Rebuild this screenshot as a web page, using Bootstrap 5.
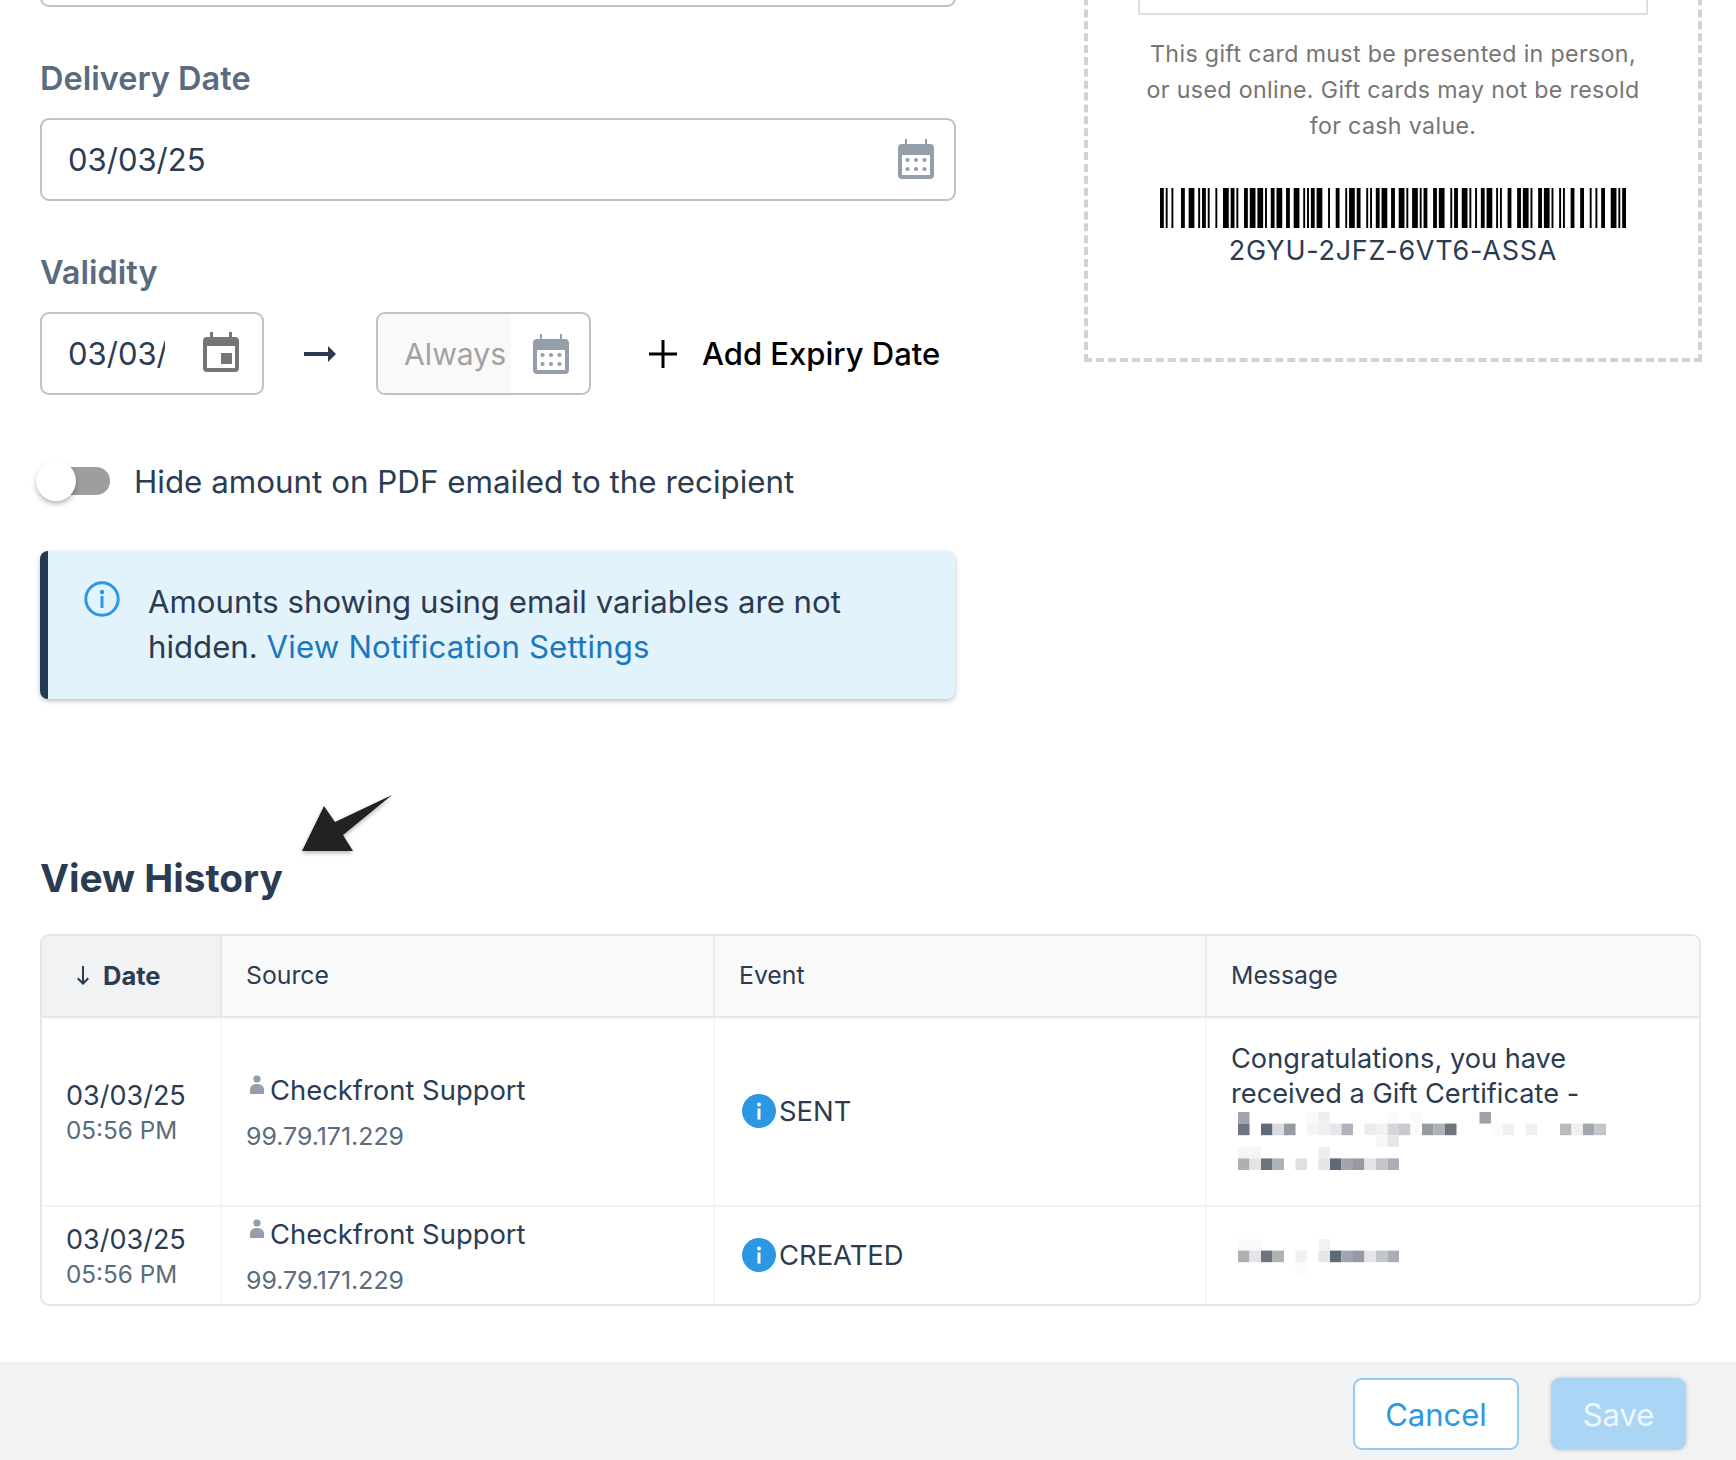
<!DOCTYPE html>
<html lang="en">
<head>
  <meta charset="UTF-8">
  <meta name="viewport" content="width=device-width, initial-scale=1.0">
  <title>Gift Certificate</title>
  <link href="https://cdn.jsdelivr.net/npm/bootstrap@5.3.0/dist/css/bootstrap.min.css" rel="stylesheet">
  <style>
    html, body { height: 1460px; overflow: hidden; }
    body { font-family: Inter, "Liberation Sans", sans-serif; color: #2b3c52; background: #fff; font-size: 31.2px; }
    .page-main { height: 1362px; overflow: hidden; }
    .left-col { width: 916px; margin-left: 40px; flex: none; }
    .right-col { width: 618px; margin-left: 128px; flex: none; }

    .box-field { border: 2.5px solid #bfc1c4; border-radius: 9px; background: #fff; height: 83px; overflow: hidden; }
    .box-field input { border: 0; padding: 0; background: transparent; font-size: 31px; color: #2b3c52; box-shadow: none; border-radius: 0; height: 100%; }
    .top-stub { height: 67px; margin-top: -60px; margin-bottom: 50px; }
    .fld-label { font-size: 32.5px; font-weight: 600; color: #5a6b7e; line-height: 44px; margin: 0 0 17px; display: block; }
    .mb-fld { margin-bottom: 50px; }
    .date-wide { padding: 0 20px 0 26px; }
    .date-wide svg { margin-top: -2px; }
    .date-from { width: 224px; padding: 0 23px 0 26px; }
    .date-from input { width: 97px; }
    .date-from svg { margin-top: -4px; }
    .date-to { width: 215px; }
    .always-part { width: 133px; height: 100%; background: #f9f9f9; padding-left: 26px; }
    .always-part input { width: 100%; color: #a2a2a2; font-size: 30.2px; }
    .always-part input::placeholder { color: #a2a2a2; opacity: 1; }
    .cal-icon { width: 36px; height: 40px; flex: none; }
    .cal-right { margin-left: 22px; }
    .arrow-gap { width: 112px; }
    .add-link { color: #000; font-size: 31px; font-weight: 500; text-decoration: none; margin-left: 58px; padding-top: 2px; white-space: nowrap; }
    .add-link svg { margin: -2px 25px 0 0; }

    .toggle-row { margin-top: 66px; height: 40px; font-size: 31.35px; }
    .toggle-txt { padding-top: 2px; }
    .tgl-track { position: relative; width: 70px; height: 28px; background: #9e9e9e; border-radius: 14px; flex: none; margin-right: 24px; }
    .tgl-track::before { content: ""; position: absolute; left: -4px; top: -6px; width: 40px; height: 40px; border-radius: 50%; background: #fff; box-shadow: 0 3px 5px rgba(0,0,0,.28); }
    .note-box { margin: 50px 1px 0 0; height: 148px; padding: 29px 30px 0 36px; background: #e3f3fc; border: 0; border-left: 8px solid #233a55; border-radius: 8px; box-shadow: 0 2px 5px rgba(60,80,100,.35); color: #2b3c52; line-height: 45px; }
    .note-box svg { width: 36px; height: 36px; flex: none; margin: 1px 28px 0 0; }
    .note-box a { color: #1a78bf; text-decoration: none; letter-spacing: .17px; }

    .hist-title { position: relative; font-size: 38.8px; font-weight: 700; line-height: 56px; margin: 151px 0 28px; color: #2b3c52; }
    .hist-arrow { position: absolute; left: 258px; top: -59px; width: 96px; height: 64px; filter: drop-shadow(0 2px 2px rgba(0,0,0,.3)); }

    .hist-wrap { width: 1661px; height: 372px; border: 2px solid #e5e6e7; border-radius: 9px; overflow: hidden; }
    .hist-table { table-layout: fixed; width: 100%; margin: 0; color: #2b3c52; --bs-table-bg: transparent; }
    .hist-table th { height: 81px; padding: 0 0 0 24px; font-size: 24.8px; font-weight: 400; vertical-align: middle; background: #f9f9f9; border-bottom: 2px solid #e6e7e8; border-right: 2px solid #eaeaea; box-shadow: 0 3px 4px -2px rgba(0,0,0,.05); }
    .hist-table th:last-child, .hist-table td:last-child { border-right: 0; }
    .hist-table th.sorted { background: #f1f2f4; font-weight: 700; font-size: 25.5px; padding-left: 35px; border-right-color: #e6e7e8; }
    .sorted svg { margin: -4px 14px 0 0; vertical-align: middle; }
    .hist-table td { padding: 0 0 0 24px; vertical-align: middle; border-bottom: 2px solid #f1f1f1; border-right: 2px solid #f7f7f7; }
    .hist-table tr:last-child td { border-bottom: 0; }
    .row-big td { height: 189px; }
    .row-small td { height: 98px; }
    .hist-table .cell-src { padding-top: 2px; }
    .sub-time { font-size: 24.3px; color: #5b6b7d; line-height: 32px; display: block; }
    .date-main { font-size: 27px; line-height: 36px; display: block; }
    .who { font-size: 27.4px; line-height: 36px; display: flex; align-items: flex-start; }
    .who svg { width: 14px; height: 19px; margin: 3px 6px 0 4px; flex: none; }
    .ip-txt { font-size: 24.9px; color: #5b6b7d; line-height: 33px; display: block; margin-top: 12px; }
    .evt { font-size: 27.4px; display: flex; align-items: center; margin-left: 3px; }
    .evt svg { width: 34px; height: 34px; flex: none; margin-right: 3px; }
    .msg-txt { font-size: 27.2px; line-height: 35px; display: block; margin-top: -6px; max-width: 380px; }
    .blur-two { display: block; width: 400px; height: 58px; margin: 1px 0 7px 7px; }
    .blur-one { display: block; width: 200px; height: 36px; margin: 2px 0 0 7px; }

    .gift-panel { height: 412px; margin-top: -50px; border: 4px dashed #d2d2d2; padding: 0 50px; border-top: 0; }
    .gift-inner { height: 65px; border: 2.5px solid #dedede; border-top: 0; }
    .gift-terms { font-size: 23.2px; line-height: 36px; color: #757575; text-align: center; margin: 21px 0 0; letter-spacing: .35px; }
    .bar-svg { display: block; width: 466px; height: 40px; margin: 44px auto 0; }
    .gift-code { text-align: center; font-size: 27px; line-height: 36px; letter-spacing: .75px; color: #2b3c52; margin-top: 5px; }

    .page-foot { height: 98px; background: #f1f2f4; padding: 16px 50px 0 0; }
    .page-foot .btn { height: 72px; font-size: 31px; border-radius: 9px; padding: 2px 0 0; }
    .btn-cancel { width: 166px; margin-right: 32px; background: #fff; border: 2.5px solid #93caf0; color: #2c97e2; }
    .btn-save { width: 135px; background: #abd5f4; border: 0; color: #eef7fd; box-shadow: 0 0 4px rgba(0,0,0,.18); }
  </style>
</head>
<body>
  <div class="page-main d-flex">
    <!-- form column -->
    <div class="left-col">
      <div class="box-field top-stub"></div>

      <label class="fld-label">Delivery Date</label>
      <div class="box-field date-wide d-flex align-items-center mb-fld">
        <input type="text" class="form-control" value="03/03/25">
        <svg class="cal-icon" viewBox="0 0 36 40"><use href="#calGrey"/></svg>
      </div>

      <label class="fld-label">Validity</label>
      <div class="d-flex align-items-center">
        <div class="box-field date-from d-flex align-items-center justify-content-between">
          <input type="text" class="form-control" value="03/03/25">
          <svg class="cal-icon" viewBox="0 0 36 40">
            <path fill="#757575" d="M7 0h3v5h16V0h3v5h3a4 4 0 0 1 4 4v27a4 4 0 0 1-4 4H4a4 4 0 0 1-4-4V9a4 4 0 0 1 4-4h3z"/>
            <rect x="4" y="14" width="28" height="22" fill="#fff"/>
            <rect x="18" y="21" width="11" height="11" fill="#757575"/>
          </svg>
        </div>
        <div class="arrow-gap d-flex justify-content-center">
          <svg width="32" height="18" viewBox="0 0 32 18"><path fill="#2b3c52" d="M0 7h24V1l8 8-8 8v-6H0z"/></svg>
        </div>
        <div class="box-field date-to d-flex align-items-center">
          <div class="always-part"><input type="text" class="form-control" placeholder="Always"></div>
          <svg class="cal-icon cal-right" viewBox="0 0 36 40"><use href="#calGrey"/></svg>
        </div>
        <a href="#" class="add-link d-flex align-items-center">
          <svg width="28" height="28" viewBox="0 0 28 28"><path fill="#000" d="M12.500 0h3v12.500H28v3H15.500V28h-3V15.500H0v-3h12.500z"/></svg>Add Expiry Date
        </a>
      </div>

      <div class="toggle-row d-flex align-items-center">
        <span class="tgl-track"></span>
        <span class="toggle-txt">Hide amount on PDF emailed to the recipient</span>
      </div>

      <div class="alert note-box d-flex align-items-start">
        <svg viewBox="0 0 36 36"><circle cx="18" cy="18" r="16.200" fill="none" stroke="#2c97e2" stroke-width="3"/><circle cx="18" cy="11" r="2.200" fill="#2c97e2"/><rect x="16.500" y="15" width="3" height="12" fill="#2c97e2"/></svg>
        <div>
          <span class="d-block">Amounts showing using email variables are not</span>
          <span>hidden.</span> <a href="#">View Notification Settings</a>
        </div>
      </div>

      <h2 class="hist-title">View History
        <svg class="hist-arrow" viewBox="0 0 96 64"><path fill="#222" d="M4 60 26 15 37 31 94 4 45 44 55 60Z"/></svg>
      </h2>

      <div class="hist-wrap">
        <table class="table hist-table">
          <colgroup><col style="width:179px"><col style="width:493px"><col style="width:492px"><col></colgroup>
          <thead>
            <tr>
              <th class="sorted"><svg width="12" height="19" viewBox="0 0 12 19"><path fill="#2b3c52" d="M5 0h2v15l3.500-3.500L12 13l-6 6-6-6 1.500-1.500L5 15z"/></svg>Date</th>
              <th>Source</th>
              <th>Event</th>
              <th>Message</th>
            </tr>
          </thead>
          <tbody>
            <tr class="row-big">
              <td><span class="date-main">03/03/25</span><span class="sub-time">05:56 PM</span></td>
              <td class="cell-src"><span class="who"><svg viewBox="0 0 14 19"><use href="#personIcon"/></svg>Checkfront Support</span><span class="ip-txt">99.79.171.229</span></td>
              <td><span class="evt"><svg viewBox="0 0 34 34"><use href="#infoDot"/></svg>SENT</span></td>
              <td><span class="msg-txt">Congratulations, you have received a Gift Certificate -</span><svg class="blur-two" id="blurA" viewBox="0 0 400 58"></svg></td>
            </tr>
            <tr class="row-small">
              <td><span class="date-main">03/03/25</span><span class="sub-time">05:56 PM</span></td>
              <td class="cell-src"><span class="who"><svg viewBox="0 0 14 19"><use href="#personIcon"/></svg>Checkfront Support</span><span class="ip-txt">99.79.171.229</span></td>
              <td><span class="evt"><svg viewBox="0 0 34 34"><use href="#infoDot"/></svg>CREATED</span></td>
              <td><svg class="blur-one" id="blurB" viewBox="0 0 200 36"></svg></td>
            </tr>
          </tbody>
        </table>
      </div>
    </div>

    <!-- gift card preview -->
    <div class="right-col">
      <div class="gift-panel">
        <div class="gift-inner"></div>
        <p class="gift-terms">This gift card must be presented in person, or used online. Gift cards may not be resold for cash value.</p>
        <svg class="bar-svg" id="barcode" preserveAspectRatio="none"></svg>
        <div class="gift-code">2GYU-2JFZ-6VT6-ASSA</div>
      </div>
    </div>
  </div>

  <div class="page-foot d-flex justify-content-end">
    <button class="btn btn-cancel">Cancel</button>
    <button class="btn btn-save">Save</button>
  </div>

  <!-- shared icons -->
  <svg width="0" height="0" class="position-absolute">
    <defs>
      <g id="calGrey">
        <path fill="#959eab" d="M7 0h2v5h18V0h2v5h3a4 4 0 0 1 4 4v27a4 4 0 0 1-4 4H4a4 4 0 0 1-4-4V9a4 4 0 0 1 4-4h3z"/>
        <rect x="4" y="16" width="28" height="20" fill="#fff"/>
        <g fill="#959eab"><circle cx="9.500" cy="21" r="2.100"/><circle cx="18" cy="21" r="2.100"/><circle cx="26.500" cy="21" r="2.100"/><circle cx="9.500" cy="30" r="2.100"/><circle cx="18" cy="30" r="2.100"/><circle cx="26.500" cy="30" r="2.100"/></g>
      </g>
      <g id="personIcon" fill="#959eab">
        <circle cx="7" cy="4" r="3.600"/>
        <path d="M0 19v-4c0-4 3-6 7-6s7 2 7 6v4z"/>
      </g>
      <g id="infoDot">
        <circle cx="17" cy="17" r="17" fill="#2c97e2"/>
        <circle cx="17" cy="10.500" r="2" fill="#fff"/>
        <rect x="15.500" y="14.500" width="3" height="11" fill="#fff"/>
      </g>
    </defs>
  </svg>

  <script>
    // Code128-B bar widths for the gift card number
    const code128 = {
      "2": "223211", "6": "223112", "-": "122132", "A": "111323", "F": "132311", "G": "211313",
      "J": "112133", "S": "213113", "T": "213311", "U": "213131", "V": "311123", "Y": "312113", "Z": "312311"
    };
    const startB = "211214", checkDigit = "231212", stopCode = "2331112";
    const bars = startB + "2GYU-2JFZ-6VT6-ASSA".split("").map(c => code128[c]).join("") + checkDigit + stopCode;

    const svgNS = "http://www.w3.org/2000/svg";
    const barSvg = document.getElementById("barcode");
    let pos = 0;
    bars.split("").forEach((w, i) => {
      if (i % 2 === 0) {
        const r = document.createElementNS(svgNS, "rect");
        r.setAttribute("x", pos);
        r.setAttribute("y", 0);
        r.setAttribute("width", w);
        r.setAttribute("height", 1);
        barSvg.appendChild(r);
      }
      pos += Number(w);
    });
    barSvg.setAttribute("viewBox", "0 0 " + pos + " 1");

    // Pixelated (redacted) text, [row, col, colour]
    const lastLine = (r, dot) => [[r,0,"#b0b0b4"],[r,1,"#e4e4e6"],[r,2,"#6c7480"],[r,3,"#afb1b6"],[r,5,dot],[r,7,"#e6e6e9"],[r,8,"#5f6a78"],[r,9,"#a3a5ae"],[r,10,"#979aa4"],[r,11,"#e5e5e7"],[r,12,"#c4c5c9"],[r,13,"#a9adb5"]];
    const blurA = [
      [0,0,"#a0a4ac"],[0,6,"#fafafa"],[0,7,"#eeeff1"],[0,13,"#fafafa"],[0,15,"#fbfbfb"],[0,21,"#9ea1aa"],
      [1,0,"#6f7483"],[1,2,"#5f6a78"],[1,3,"#dadbdf"],[1,4,"#969aa2"],[1,6,"#f4f4f4"],[1,7,"#eeeff1"],[1,8,"#e6e7ea"],[1,9,"#b0b3bb"],
      [1,11,"#ebebeb"],[1,12,"#f1f3f1"],[1,13,"#d5d6da"],[1,14,"#c9cacf"],[1,15,"#fafcfa"],[1,16,"#989ba2"],[1,17,"#b0b2b8"],[1,18,"#6f747d"],
      [1,22,"#fbfbfb"],[1,23,"#f0f1f3"],[1,25,"#eff0f2"],[1,28,"#b8bac0"],[1,29,"#eef0ee"],[1,30,"#a3a6ae"],[1,31,"#c4c6cc"],
      [2,12,"#f8f8f8"],[2,13,"#e6e6e9"],
      [3,0,"#f5f5f5"],[3,1,"#f5f5f5"],[3,7,"#eeeef0"]
    ].concat(lastLine(4, "#e0e0e2"));
    const blurB = [[0,0,"#fafafa"],[0,1,"#fafafa"],[0,7,"#f3f3f4"],[2,5,"#fbfbfb"]].concat(lastLine(1, "#f0f1f3"));

    function drawBlur(id, cells) {
      const el = document.getElementById(id);
      cells.forEach(c => {
        const r = document.createElementNS(svgNS, "rect");
        r.setAttribute("x", c[1] * 11.5);
        r.setAttribute("y", c[0] * 11.6);
        r.setAttribute("width", 11.5);
        r.setAttribute("height", 11.6);
        r.setAttribute("fill", c[2]);
        el.appendChild(r);
      });
    }
    drawBlur("blurA", blurA);
    drawBlur("blurB", blurB);
  </script>
</body>
</html>
